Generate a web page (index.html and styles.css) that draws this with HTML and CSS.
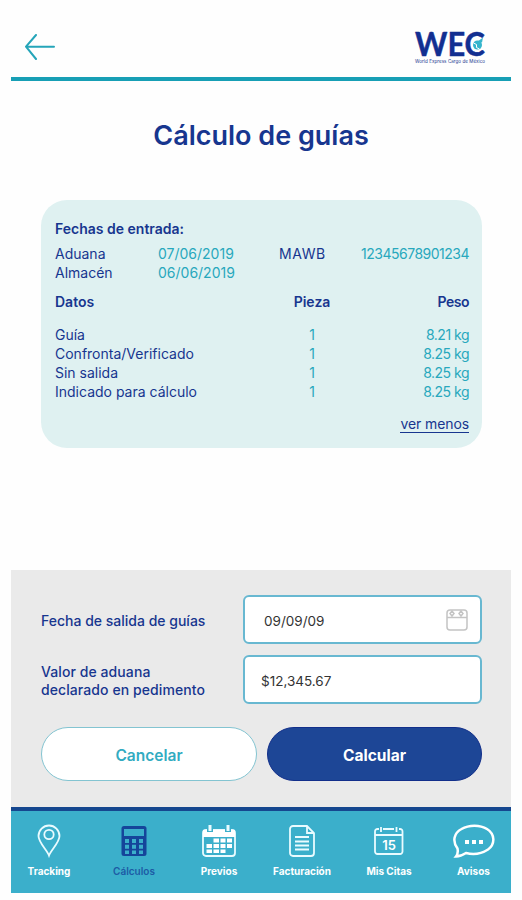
FILE: index.html
```html
<!DOCTYPE html>
<html lang="es">

<head>
    <meta charset="UTF-8">
    <meta name="viewport" content="width=device-width, initial-scale=1.0">
    <title>Cálculo de guías</title>
    <link rel="stylesheet" href="styles.css">
</head>

<body>
    <div class="app">
        <!-- Header Section -->
        <header class="header">
            <a class="back" href="#">
                <svg width="30" height="26" viewBox="0 0 30 26">
                    <path d="M11 1 L1 12.700 L11 25 M1 12.700 H29" />
                </svg>
            </a>
            <svg class="logo" width="74" height="44" viewBox="0 -5 74 44">
                <text class="logo-name" x="1" y="27.500" textLength="70" lengthAdjust="spacingAndGlyphs">WEC</text>
                <circle class="globe" cx="63.500" cy="17" r="4.500" />
                <path class="globe-line" d="M59.500 15 l3 1.500 v3 l3 1.500" />
                <path class="globe-plane" d="M63 14 l6 -4.500 l-1 5" />
                <text class="logo-sub" x="1" y="34.500" textLength="70">World Express Cargo de México</text>
            </svg>
        </header>

        <h1 class="title">Cálculo de guías</h1>

        <!-- Guide details -->
        <section class="card">
            <div class="card-title">Fechas de entrada:</div>
            <div class="dates">
                <span>Aduana</span>
                <span class="value">07/06/2019</span>
                <span class="mawb">MAWB</span>
                <span class="value number">12345678901234</span>
                <span>Almacén</span>
                <span class="value">06/06/2019</span>
            </div>
            <div class="row head">
                <span>Datos</span><span>Pieza</span><span>Peso</span>
            </div>
            <div class="row">
                <span>Guía</span><span>1</span><span>8.21 kg</span>
            </div>
            <div class="row">
                <span>Confronta/Verificado</span><span>1</span><span>8.25 kg</span>
            </div>
            <div class="row">
                <span>Sin salida</span><span>1</span><span>8.25 kg</span>
            </div>
            <div class="row">
                <span>Indicado para cálculo</span><span>1</span><span>8.25 kg</span>
            </div>
            <a class="more" href="#">ver menos</a>
        </section>

        <!-- Form Section -->
        <section class="panel">
            <div class="field">
                <div class="label">Fecha de salida de guías</div>
                <div class="input date">
                    <span>09/09/09</span>
                    <svg width="22" height="22" viewBox="0 0 22 22">
                        <rect x="1" y="1" width="20" height="20" rx="3" />
                        <path d="M1 8.500 H21" />
                        <path d="M6 2 l2 2.500 -2 2.500 -2 -2.500 z M15 2 l2 2.500 -2 2.500 -2 -2.500 z" />
                    </svg>
                </div>
            </div>
            <div class="field">
                <div class="label wide">Valor de aduana<br>declarado en pedimento</div>
                <div class="input amount">$12,345.67</div>
            </div>
            <div class="buttons">
                <button class="button cancel">Cancelar</button>
                <button class="button calculate">Calcular</button>
            </div>
        </section>

        <!-- Bottom navigation -->
        <nav class="nav">
            <a class="nav-item tracking">
                <svg width="24" height="34" viewBox="0 0 24 34">
                    <path class="line" d="M12 31.500 C10 26 1.500 18.500 1.500 12 A10.500 10.500 0 0 1 22.500 12 C22.500 18.500 14 26 12 31.500 Z" />
                    <circle class="line" cx="12" cy="10.500" r="4.700" />
                </svg>
                <span>Tracking</span>
            </a>
            <a class="nav-item calculos active">
                <svg width="26" height="34" viewBox="0 0 26 34">
                    <rect class="fill" x="0.500" y="2" width="25" height="30" rx="2.500" />
                    <path class="hole" d="M3 5 h20 v7 h-20z M4 15 h4 v4 h-4z M11 15 h4 v4 h-4z M18 15 h4 v4 h-4z M4 20.700 h4 v4 h-4z M11 20.700 h4 v4 h-4z M18 20.700 h4 v4 h-4z M4 26.400 h4 v3.500 h-4z M11 26.400 h4 v3.500 h-4z M18 26.400 h4 v3.500 h-4z" />
                </svg>
                <span>Cálculos</span>
            </a>
            <a class="nav-item previos">
                <svg width="34" height="34" viewBox="0 0 34 34">
                    <rect class="line" x="1" y="6" width="32" height="26" rx="3" />
                    <path class="fill" d="M1 6 H33 V13 H1z" />
                    <path class="hook" d="M8 2 v6 M26 2 v6" />
                    <path class="line thick" d="M8 1 v6 M26 1 v6" />
                    <path class="fill" d="M11.500 14.500h5.500v4h-5.500z M18.500 14.500h5v4h-5z M25 14.500h5v4h-5z M4.500 20h5.500v4h-5.500z M11.500 20h5.500v4h-5.500z M18.500 20h5v4h-5z M25 20h5v4h-5z M4.500 25.500h5.500v3.500h-5.500z M11.500 25.500h5.500v3.500h-5.500z M18.500 25.500h5v3.500h-5z" />
                </svg>
                <span>Previos</span>
            </a>
            <a class="nav-item facturacion">
                <svg width="26" height="34" viewBox="0 0 26 34">
                    <path class="line" d="M4 2 H18 L25 9 V29 a3 3 0 0 1 -3 3 H4 a3 3 0 0 1 -3 -3 V5 a3 3 0 0 1 3 -3 Z M18 2 V9 H25" />
                    <path class="line" d="M6 13 H20 M6 17.500 H20 M6 21.500 H20 M6 25.500 H20" />
                </svg>
                <span>Facturación</span>
            </a>
            <a class="nav-item citas">
                <svg width="30" height="34" viewBox="0 0 30 34">
                    <path class="line" d="M5 5 H3.500 a2.500 2.500 0 0 0 -2.500 2.500 V27.500 a2.500 2.500 0 0 0 2.500 2.500 H26 a2.500 2.500 0 0 0 2.500 -2.500 V7.500 a2.500 2.500 0 0 0 -2.500 -2.500 H25 M9 5 H20 M1 11 H28.500 M7 3 V8 M22.500 3 V8" />
                    <text x="15" y="25.500" text-anchor="middle">15</text>
                </svg>
                <span>Mis Citas</span>
            </a>
            <a class="nav-item avisos">
                <svg width="42" height="34" viewBox="0 0 42 34">
                    <path class="line bubble" d="M3 32.500 C5 30 5 27 4.500 24.500 C-1 17 1 9 8.500 5 C16 0.500 27 0.500 34 5 C42 10 42.500 20 35 25.500 C28 30 20 31 13 29 C10 31 7 32.500 3 32.500 Z" />
                    <path class="fill" d="M12 16h4v4h-4z M19 16h4v4h-4z M26 16h4v4h-4z" />
                </svg>
                <span>Avisos</span>
            </a>
        </nav>
    </div>
</body>

</html>
```
FILE: styles.css
```css
* {
    box-sizing: border-box;
}

body {
    margin: 0;
    background-color: #fefefe;
    color: #17368f;
    font-family: Inter, "Liberation Sans", sans-serif;
}

a {
    color: inherit;
    text-decoration: none;
}

svg {
    display: block;
    fill: none;
}

.app {
    width: 500px;
    height: 893px;
    margin: 0 0 7px 11px;
    display: flex;
    flex-direction: column;
}

.header {
    height: 81px;
    border-bottom: 4px solid #179fb5;
    display: flex;
    justify-content: space-between;
    align-items: flex-start;
    padding: 23px 23px 0 14px;
}

.back {
    margin-top: 11px;
}

.back path {
    stroke: #25a5b9;
    stroke-width: 2;
    stroke-linecap: round;
    stroke-linejoin: round;
}

.logo {
    overflow: visible;
}

.logo-name {
    font-family: Lato, sans-serif;
    font-size: 33px;
    font-weight: bold;
    fill: #122f91;
    stroke: #122f91;
    stroke-width: 0.5;
    stroke-linejoin: round;
}

.logo-sub {
    font-size: 4.500px;
    fill: #17368f;
}

.globe,
.globe-plane {
    fill: #35b5cc;
}

.globe-line {
    stroke: #fefefe;
}

.title {
    margin: 36px 0 0;
    font-size: 27px;
    line-height: 38px;
    font-weight: 600;
    text-align: center;
    letter-spacing: 0;
}

.card {
    margin: 45px 29px 0 30px;
    height: 248px;
    padding: 19px 13px 0 14px;
    border-radius: 26px;
    background-color: #dff1f1;
    font-size: 14px;
    line-height: 18.750px;
}

.card-title {
    height: 26px;
    line-height: 20px;
    font-weight: 600;
}

.dates {
    display: grid;
    grid-template-columns: 103px 121px 1fr auto;
}

.value {
    color: #28a8bd;
}

.mawb {
    letter-spacing: 0.600px;
}

.number {
    text-align: right;
    letter-spacing: -0.500px;
}

.row {
    display: grid;
    grid-template-columns: 207px 100px 1fr;
    color: #28a8bd;
}

.row span:first-child {
    color: #17368f;
}

.row span:nth-child(2) {
    text-align: center;
}

.row span:last-child {
    text-align: right;
    letter-spacing: -0.500px;
}

.row.head {
    margin: 10px 0 15px;
    font-weight: 600;
    color: #17368f;
}

.more {
    display: block;
    width: fit-content;
    margin: 14px 0 0 auto;
    line-height: 17px;
    letter-spacing: -0.100px;
    border-bottom: 1px solid #17368f;
}

.panel {
    margin-top: 122px;
    height: 237px;
    padding: 25px 29px 0 30px;
    background-color: #eaeaea;
}

.field {
    display: flex;
    justify-content: space-between;
    align-items: center;
    margin-bottom: 11px;
}

.label {
    font-size: 14px;
    line-height: 18px;
    font-weight: 500;
    padding-top: 3px;
}

.label.wide {
    letter-spacing: 0.080px;
}

.input {
    display: flex;
    justify-content: space-between;
    align-items: center;
    width: 239px;
    height: 49px;
    padding: 3px 12px 0 16px;
    border: 2px solid #68b8d1;
    border-radius: 6px;
    background-color: white;
    color: #333;
    font-size: 13.500px;
}

.input.date {
    padding-left: 19px;
}

.input.date svg {
    margin-top: -3px;
    stroke: #c4c4c4;
    stroke-width: 1.500;
}

.buttons {
    display: grid;
    grid-template-columns: 216px 215px;
    gap: 10px;
    margin-top: 23px;
}

.button {
    height: 54px;
    padding: 2px 0 0;
    border: 1px solid #83c4d1;
    border-radius: 27px;
    background-color: white;
    color: #32abc1;
    font-family: inherit;
    font-size: 15.500px;
    font-weight: 600;
}

.calculate {
    border-color: #122f8b;
    background-color: #1d4696;
    color: white;
    font-weight: 700;
}

.nav {
    height: 86px;
    border-top: 4px solid #15478f;
    background-color: #3bafcb;
    color: white;
    display: grid;
    grid-template-columns: 80px 86px 84px 84px 88px 78px;
    padding-top: 13px;
}

.nav-item {
    display: flex;
    flex-direction: column;
    align-items: center;
    font-size: 10px;
    line-height: 14px;
    font-weight: 700;
    gap: 6px;
}

.nav-item.tracking {
    padding-right: 4px;
}

.nav-item.facturacion {
    padding-right: 2px;
}

.nav-item.avisos {
    padding-left: 3px;
}

.nav-item.active {
    color: #1d5ba5;
    font-weight: 600;
}

.nav .line {
    stroke: #e9fbff;
    stroke-width: 1.800;
}

.nav .thick {
    stroke-width: 3;
}

.nav .bubble {
    stroke-width: 2.500;
    stroke: white;
}

.nav .fill {
    fill: white;
}

.nav .hook {
    stroke: #3bafcb;
    stroke-width: 6;
}

.nav .active .fill,
.nav .active.nav-item .fill {
    fill: #15459a;
}

.nav .hole {
    fill: #3bafcb;
}

.nav text {
    fill: white;
    font-size: 13px;
    font-weight: 600;
}
```
